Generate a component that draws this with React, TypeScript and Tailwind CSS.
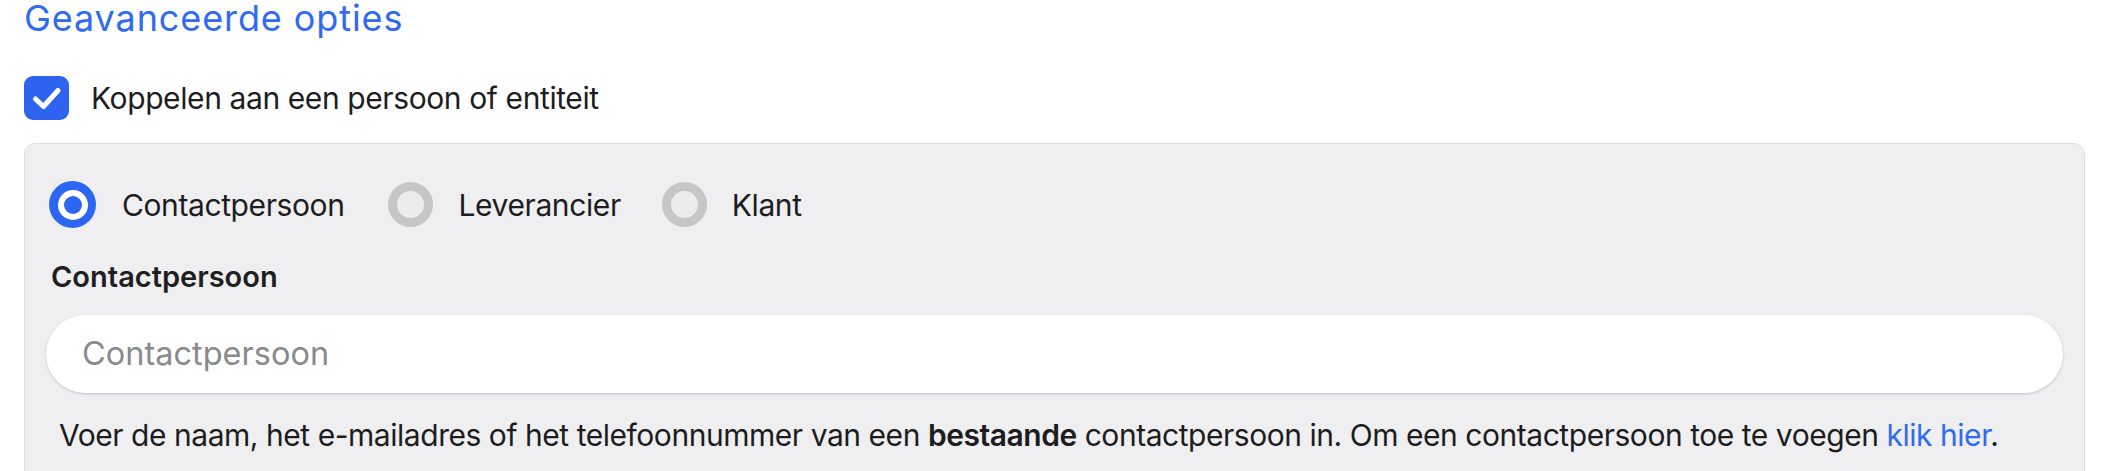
import React from "react";

export default function App() {
  return (
    <div
      className="w-[2109px] h-[471px] overflow-hidden bg-white px-6 text-[#1d1d1f]"
      style={{ fontFamily: "Inter, 'Noto Sans', sans-serif" }}
    >
      <h2 className="text-[36px] leading-none tracking-[0.9px] text-[#2f6af0] font-normal">
        Geavanceerde opties
      </h2>

      <label className="mt-[40px] flex items-center gap-[22px]">
        <span className="flex h-[44px] w-[45px] items-center justify-center rounded-[9px] bg-[#2d63ee]">
          <svg width="45" height="44" viewBox="0 0 45 44" fill="none">
            <path
              d="M11.5 23 L19.5 30.5 L34 14.5"
              stroke="white"
              strokeWidth="5"
              strokeLinecap="round"
              strokeLinejoin="round"
            />
          </svg>
        </span>
        <span className="text-[30px] leading-[36px] tracking-[-0.4px]">
          Koppelen aan een persoon of entiteit
        </span>
      </label>

      <div className="mt-[23px] rounded-[11px] border border-[#dedee0] bg-[#efeff1] px-[21px] pt-[37px] pb-10 tracking-[-0.4px]">
        <div className="flex items-center pl-[3px]">
          <div className="flex items-center gap-[26px]">
            <span className="flex h-[47px] w-[47px] items-center justify-center rounded-full bg-[#2c66f2]">
              <span className="flex h-[30px] w-[30px] items-center justify-center rounded-full bg-white">
                <span className="h-[18px] w-[18px] rounded-full bg-[#2c66f2]" />
              </span>
            </span>
            <span className="text-[30px] leading-[36px]">Contactpersoon</span>
          </div>
          <div className="ml-[44px] flex items-center gap-[25px]">
            <span className="h-[45px] w-[45px] rounded-full border-[9px] border-[#c6c6c8] bg-[#ececee]" />
            <span className="text-[30px] leading-[36px]">Leverancier</span>
          </div>
          <div className="ml-[41px] flex items-center gap-[25px]">
            <span className="h-[45px] w-[45px] rounded-full border-[9px] border-[#c6c6c8] bg-[#ececee]" />
            <span className="text-[30px] leading-[36px]">Klant</span>
          </div>
        </div>

        <div className="mt-[31px] pl-[5px] text-[29px] leading-[36px] font-semibold tracking-normal text-[#1f1f21]">
          Contactpersoon
        </div>

        <div className="mt-[20px] flex h-[78px] items-center rounded-full bg-white pl-[36px] shadow-[0_1px_3px_rgba(0,0,0,0.18)]">
          <span className="text-[32.5px] tracking-normal text-[#8a8a8e]">Contactpersoon</span>
        </div>

        <p className="mt-[24px] pl-[13px] text-[30px] leading-[36px] tracking-[-0.46px]">
          Voer de naam, het e-mailadres of het telefoonnummer van een{" "}
          <b className="font-semibold">bestaande</b> contactpersoon in. Om een contactpersoon toe te voegen{" "}
          <a className="text-[#2f6af0]">klik hier</a>.
        </p>
      </div>
    </div>
  );
}
